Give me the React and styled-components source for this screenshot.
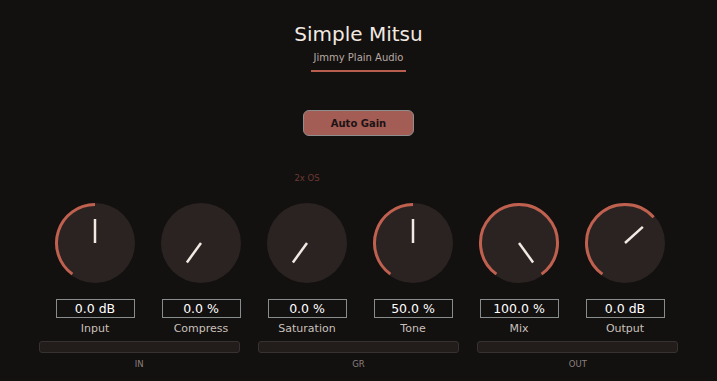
import React from "react";
import styled, { createGlobalStyle } from "styled-components";

const Global = createGlobalStyle`
  html, body { margin: 0; padding: 0; background: #131010; }
  body { font-family: "DejaVu Sans", "Liberation Sans", sans-serif; }
`;

const Page = styled.div`
  width: 717px;
  height: 381px;
  background: #131010;
  display: flex;
  flex-direction: column;
  align-items: center;
  overflow: hidden;
`;

const Title = styled.h1`
  margin: 21px 0 0;
  font-size: 20px;
  line-height: 26px;
  font-weight: normal;
  color: #f2e9e0;
`;

const Subtitle = styled.div`
  margin-top: 4px;
  font-size: 10px;
  line-height: 14px;
  color: #b7a9a2;
`;

const Rule = styled.div`
  margin-top: 5px;
  width: 95px;
  height: 2px;
  background: #b85e4f;
`;

const GainButton = styled.button`
  margin-top: 38px;
  width: 111px;
  height: 26px;
  border: 1px solid #8e8e8e;
  border-radius: 6px;
  background: #a35d54;
  color: #1c1414;
  font-family: "DejaVu Sans", sans-serif;
  font-weight: bold;
  font-size: 10px;
  padding: 0;
`;

const KnobRow = styled.div`
  margin-top: 36px;
  width: 636px;
  padding-left: 3px;
  display: grid;
  grid-template-columns: repeat(6, 106px);
`;

const Column = styled.div`
  display: flex;
  flex-direction: column;
  align-items: center;
`;

const Caption = styled.div`
  height: 12px;
  font-size: 8.5px;
  line-height: 12px;
  color: #6b3a33;
  visibility: ${(p) => (p.$show ? "visible" : "hidden")};
  margin-bottom: 17px;
`;

const ValueBox = styled.div`
  margin-top: 14px;
  width: 77px;
  height: 17px;
  border: 1px solid #878d8d;
  color: #ffffff;
  font-size: 12.5px;
  line-height: 17px;
  text-align: center;
`;

const Label = styled.div`
  margin-top: 3px;
  font-size: 11px;
  line-height: 16px;
  color: #c9c0ba;
`;

const MeterRow = styled.div`
  margin-top: 4px;
  width: 640px;
  display: grid;
  grid-template-columns: repeat(3, 1fr);
  column-gap: 18px;
`;

const Meter = styled.div`
  display: flex;
  flex-direction: column;
  align-items: center;
`;

const MeterBar = styled.div`
  width: 100%;
  height: 12px;
  box-sizing: border-box;
  border: 1px solid #383131;
  border-radius: 3px;
  background: #221c1b;
`;

const MeterLabel = styled.div`
  margin-top: 5px;
  font-size: 8.5px;
  line-height: 12px;
  color: #8a807c;
`;

const pt = (cx, cy, r, deg) => {
  const a = (deg * Math.PI) / 180;
  return [cx + r * Math.sin(a), cy - r * Math.cos(a)];
};

const START = 216;

function Knob({ angle }) {
  const cx = 42, cy = 42, r = 40;
  const ar = 38.5;
  const [sx, sy] = pt(cx, cy, ar, START);
  const [ex, ey] = pt(cx, cy, ar, angle);
  const sweep = angle - START;
  const [px, py] = pt(cx, cy, 24, angle);
  return (
    <svg width="84" height="84" viewBox="0 0 84 84">
      <circle cx={cx} cy={cy} r={r} fill="#2a2322" />
      {sweep > 0.5 && (
        <path
          d={`M ${sx} ${sy} A ${ar} ${ar} 0 ${sweep > 180 ? 1 : 0} 1 ${ex} ${ey}`}
          fill="none"
          stroke="#c0604f"
          strokeWidth="3"
        />
      )}
      <line x1={cx} y1={cy} x2={px} y2={py} stroke="#f1e9e2" strokeWidth="2.5" />
    </svg>
  );
}

const knobs = [
  { label: "Input", value: "0.0 dB", angle: 360 },
  { label: "Compress", value: "0.0 %", angle: 216 },
  { label: "Saturation", value: "0.0 %", angle: 216, caption: "2x OS" },
  { label: "Tone", value: "50.0 %", angle: 360 },
  { label: "Mix", value: "100.0 %", angle: 504 },
  { label: "Output", value: "0.0 dB", angle: 408 },
];

export default function App() {
  return (
    <Page>
      <Global />
      <Title>Simple Mitsu</Title>
      <Subtitle>Jimmy Plain Audio</Subtitle>
      <Rule />
      <GainButton>Auto Gain</GainButton>
      <KnobRow>
        {knobs.map((k) => (
          <Column key={k.label}>
            <Caption $show={!!k.caption}>{k.caption || "-"}</Caption>
            <Knob angle={k.angle} />
            <ValueBox>{k.value}</ValueBox>
            <Label>{k.label}</Label>
          </Column>
        ))}
      </KnobRow>
      <MeterRow>
        {["IN", "GR", "OUT"].map((m) => (
          <Meter key={m}>
            <MeterBar />
            <MeterLabel>{m}</MeterLabel>
          </Meter>
        ))}
      </MeterRow>
    </Page>
  );
}
